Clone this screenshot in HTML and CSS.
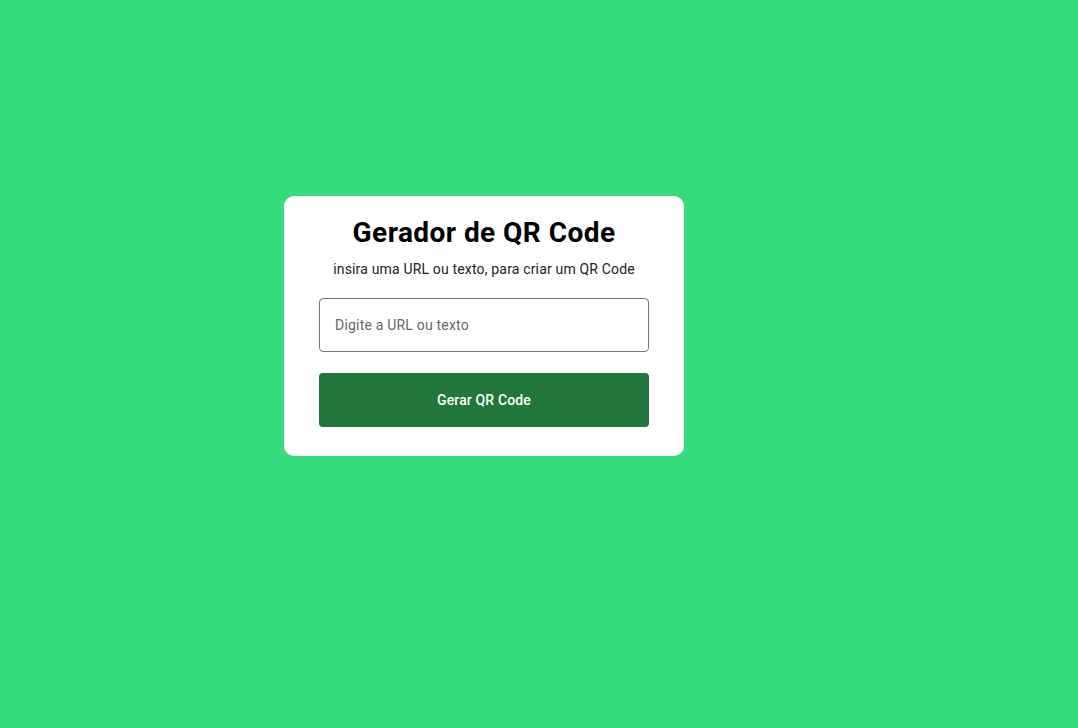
FILE: index.html
```html
<!DOCTYPE html>
<html lang="pt-BR">
<head>
<meta charset="UTF-8">
<title>Gerador de QR Code</title>
<link rel="stylesheet" href="styles.css">
</head>
<body>
<main class="page">
  <div class="card">
    <h1 class="title">Gerador de QR Code</h1>
    <p class="subtitle">insira uma URL ou texto, para criar um QR Code</p>
    <input class="field" type="text" placeholder="Digite a URL ou texto">
    <button class="btn" type="button">Gerar QR Code</button>
  </div>
</main>
</body>
</html>
```

FILE: styles.css
```css
* { box-sizing: border-box; }
html, body { margin: 0; height: 100%; }
body {
  background: #34dc7c;
  font-family: Roboto, "Noto Sans", sans-serif;
}
.page {
  padding: 196px 0 0 284px;
}
.card {
  width: 400px;
  background: #ffffff;
  border-radius: 10px;
  padding: 20px 35px 29px;
  display: flex;
  flex-direction: column;
  align-items: stretch;
}
.title {
  margin: 0;
  font-size: 28px;
  line-height: 33px;
  font-weight: 700;
  color: #000;
  text-align: center;
  letter-spacing: 0.45px;
}
.subtitle {
  margin: 12px 0 0;
  font-size: 14px;
  line-height: 16px;
  color: #222;
  text-align: center;
  letter-spacing: 0.17px;
}
.field {
  margin-top: 21px;
  height: 54px;
  border: 1px solid #767676;
  border-radius: 4px;
  padding: 0 15px;
  font-family: Roboto, sans-serif;
  font-size: 14px;
  color: #222;
  outline: none;
  letter-spacing: 0.2px;
}
.field::placeholder { color: #666; }
.btn {
  margin-top: 21px;
  height: 54px;
  border: none;
  border-radius: 4px;
  background: #21763a;
  color: #fff;
  font-family: Roboto, sans-serif;
  font-size: 14px;
  font-weight: 500;
  letter-spacing: 0.15px;
  cursor: pointer;
}
```
